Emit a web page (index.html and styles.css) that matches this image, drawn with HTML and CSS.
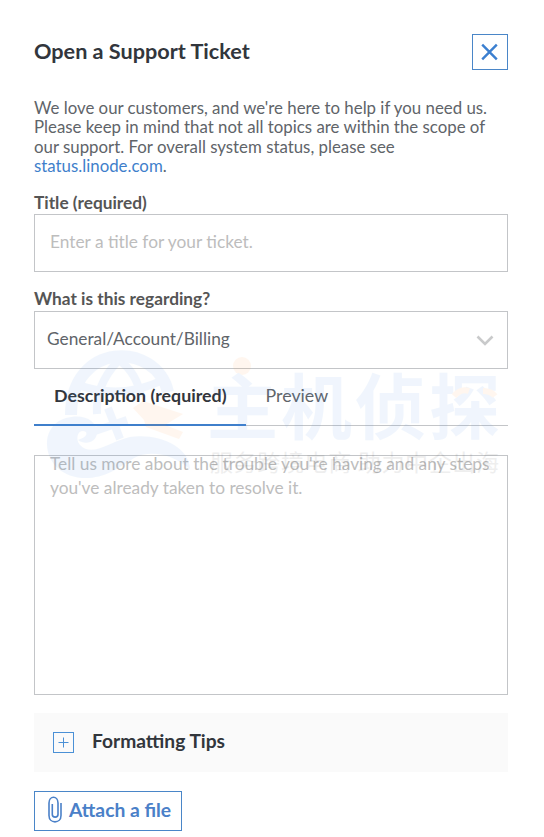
FILE: index.html
```html
<!DOCTYPE html>
<html lang="en">
<head>
  <meta charset="UTF-8">
  <meta name="viewport" content="width=device-width, initial-scale=1">
  <title>Open a Support Ticket</title>
  <link rel="stylesheet" href="styles.css">
</head>
<body>

  <div class="drawer">
    <!-- Header -->
    <div class="drawer-header">
      <h1>Open a Support Ticket</h1>
      <button type="button" class="close-btn" aria-label="Close">
        <svg width="18" height="18" viewBox="0 0 18 18">
          <path d="M1.2 1.7L15.8 16.3M15.8 1.7L1.2 16.3" />
        </svg>
      </button>
    </div>

    <p class="intro">We love our customers, and we're here to help if you need us. Please keep in mind that not all topics are within the scope of our support. For overall system status, please see <a href="#">status.linode.com</a>.</p>

    <!-- Ticket form -->
    <form class="ticket-form">
      <label for="title">Title (required)</label>
      <input type="text" id="title" class="text-input" placeholder="Enter a title for your ticket.">

      <label for="regarding" class="regarding-label">What is this regarding?</label>
      <div class="select" id="regarding">
        <span>General/Account/Billing</span>
        <svg width="18" height="12" viewBox="0 0 18 12">
          <path d="M1.5 1.5L9 9L16.5 1.5" />
        </svg>
      </div>

      <div class="tabs">
        <a class="tab active">Description (required)</a>
        <a class="tab">Preview</a>
      </div>

      <textarea class="description" placeholder="Tell us more about the trouble you're having and any steps you've already taken to resolve it."></textarea>

      <div class="tips">
        <svg width="21" height="21" viewBox="0 0 21 21">
          <rect x="0.5" y="0.5" width="20" height="20" />
          <path d="M5.5 10.5H15.5M10.5 5.5V15.5" />
        </svg>
        <h3>Formatting Tips</h3>
      </div>

      <button type="button" class="attach-btn">
        <svg width="14" height="27" viewBox="0 0 14 27">
          <path d="M10 7V18.5C10 22 4.3 22 4.3 18.5V8M10 7C10 -0.6 1 -0.6 1 7V19.5C1 28 13 28 13 19.5V7" />
        </svg>
        Attach a file
      </button>
    </form>
  </div>

  <!-- Watermark -->
  <svg class="watermark" width="470" height="140" viewBox="40 345 470 140">
    <g class="globe">
      <path class="rim" d="M71 415C71 341 156 341 168 392" />
      <path d="M78 385Q122 400 163 380" />
      <path d="M117 362Q95 386 97 414" />
      <path d="M119 360Q137 373 141 397" />
      <path d="M92 432L127 420M108 408L120 439" />
    </g>
    <path class="wave" d="M66 418C83 413 97 420 97 433C96 443 85 445 78 440C83 438 88 436 86 432C79 428 74 438 80 445C92 458 111 441 130 437C158 433 189 446 190 469C174 455 151 449 134 458C117 469 104 479 82 478C59 476 46 460 47 441C48 430 55 421 66 418Z" />
    <path class="plane" d="M133 408L143 401L183 414L165 425L183 432L179 439L146 427L144 420Z" />
    <circle class="dot" cx="242" cy="366" r="9" />
    <text class="brand" x="207" y="433" textLength="293">主机侦探</text>
    <path class="eyes" d="M454 396Q461 388 469 391M483 391Q491 391 495 396" />
    <text class="slogan" x="210" y="471" textLength="289">服务跨境电商 助力中企出海</text>
  </svg>

</body>
</html>
```
FILE: styles.css
```css
* {
  margin: 0;
  padding: 0;
  box-sizing: border-box;
}
body {
  position: relative;
  height: 837px;
  font-family: 'Lato', sans-serif;
  font-size: 17.3px;
  color: #606469;
  background: #fff;
  overflow: hidden;
}
.drawer {
  padding: 34px 36px 0 34px;
}

/* Header */
.drawer-header {
  display: flex;
  justify-content: space-between;
  align-items: center;
  height: 36px;
}
h1 {
  padding-bottom: 2px;
  font-size: 21.65px;
  font-weight: bold;
  color: #32363c;
}
.close-btn {
  display: flex;
  justify-content: center;
  align-items: center;
  width: 36px;
  height: 36px;
  background: none;
  border: 1px solid #4a86c8;
}
.close-btn svg {
  fill: none;
  stroke: #3b7fd0;
  stroke-width: 2.4;
}
.intro {
  margin-top: 28px;
  font-size: 16.84px;
  line-height: 19.4px;
}
.intro a {
  color: #3f7fcb;
  text-decoration: none;
}

/* Form */
.ticket-form {
  display: flex;
  flex-direction: column;
  margin-top: 16px;
}
label {
  height: 22px;
  line-height: 21px;
  font-weight: bold;
  color: #555;
}
.text-input,
.select,
.description {
  width: 100%;
  border: 1px solid #c3c5c8;
  font-family: inherit;
  font-size: 17.3px;
  background: #fff;
}
.text-input {
  height: 58px;
  padding: 0 15px 2px;
}
.text-input::placeholder,
.description::placeholder {
  color: #bdbdbd;
}
.regarding-label {
  height: 23px;
  margin-top: 16px;
}
.select {
  display: flex;
  justify-content: space-between;
  align-items: center;
  height: 58px;
  padding: 0 13px 2px 12px;
}
.select svg {
  margin-top: 4px;
  fill: none;
  stroke: #c9cacb;
  stroke-width: 2.6;
}
.tabs {
  display: flex;
  height: 57px;
  font-size: 17.8px;
  border-bottom: 1px solid #c3c5c8;
}
.tab {
  height: 57px;
  padding: 0 19px 0 20px;
  line-height: 52px;
}
.tab.active {
  font-weight: bold;
  color: #32363c;
  border-bottom: 2px solid #3f7fcb;
}
.description {
  height: 240px;
  margin-top: 29px;
  padding: 0 15px;
  line-height: 24px;
  resize: none;
}
.description::placeholder {
  position: relative;
  top: -4px;
}
.tips {
  display: flex;
  align-items: center;
  gap: 18px;
  height: 59px;
  margin-top: 18px;
  padding-left: 19px;
  background: #fafafa;
}
.tips svg {
  fill: none;
  stroke: #4a90d6;
}
.tips h3 {
  padding-bottom: 3px;
  font-size: 19.2px;
  color: #32363c;
}
.attach-btn {
  display: flex;
  align-items: center;
  gap: 7px;
  width: 148px;
  height: 40px;
  margin-top: 19px;
  padding: 0 0 2px 13px;
  border: 1px solid #4a86c8;
  background: none;
  font-family: inherit;
  font-size: 19.3px;
  font-weight: bold;
  color: #4a80c8;
  white-space: nowrap;
}
.attach-btn svg {
  fill: none;
  stroke: #4a80c8;
  stroke-width: 1.6;
}

/* Watermark */
.watermark {
  position: absolute;
  left: 40px;
  top: 345px;
  pointer-events: none;
  opacity: 0.08;
}
.globe {
  fill: none;
  stroke: #4a8fe8;
  stroke-width: 8;
}
.rim {
  stroke-width: 12;
}
.wave,
.brand {
  fill: #4a8fe8;
}
.plane,
.dot {
  fill: #ff9a3c;
}
.eyes {
  fill: none;
  stroke: #ff9a3c;
  stroke-width: 6;
}
.brand,
.slogan {
  font-family: 'Noto Sans CJK SC', sans-serif;
}
.brand {
  font-size: 71px;
  font-weight: bold;
}
.slogan {
  font-size: 23px;
  fill: #333;
}
```
